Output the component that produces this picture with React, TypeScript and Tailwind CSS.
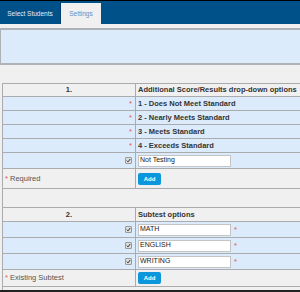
import React from 'react';

const font = "font-['Liberation_Sans',Arial,sans-serif]";

function Check() {
  return (
    <span className="inline-flex h-[7px] w-[7px] items-center justify-center rounded-[1px] border border-[#9a9a9a] bg-[#dcdcdc]">
      <svg viewBox="0 0 8 8" className="h-[5px] w-[5px]">
        <path d="M1.2 4.2 L3.2 6.2 L6.8 1.6" fill="none" stroke="#333" strokeWidth="1.6" />
      </svg>
    </span>
  );
}

function Star() {
  return <span className="text-[#e4505a]">*</span>;
}

function AddButton() {
  return (
    <button className="h-[12px] w-[23px] rounded-[2px] bg-[#0c97dd] text-[6px] font-bold leading-none text-white">
      Add
    </button>
  );
}

function Field({ value }: { value: string }) {
  return (
    <div className="flex h-[12px] w-[93px] items-center border border-[#c4c4c4] bg-white px-[1px] text-[7px] text-[#222]">
      {value}
    </div>
  );
}

const line = 'border-b border-[#a9abad]';

function Row({ left, right, h, blue = true }: { left: React.ReactNode; right: React.ReactNode; h: string; blue?: boolean }) {
  return (
    <div className={`flex ${h} ${line} ${blue ? 'bg-[#dcebfc]' : ''}`}>
      <div className="flex w-[133px] shrink-0 items-center justify-end border-r border-[#a9abad] pr-[3px]">{left}</div>
      <div className="flex flex-1 items-center gap-[3px] pl-[2px]">{right}</div>
    </div>
  );
}

function Header({ num, title, h }: { num: string; title: string; h: string }) {
  return (
    <div className={`flex ${h} border-y border-[#a9abad] text-[7.5px] font-bold text-[#333]`}>
      <div className="flex w-[133px] shrink-0 items-center justify-center border-r border-[#a9abad]">{num}</div>
      <div className="flex flex-1 items-center whitespace-nowrap pl-[2px]">{title}</div>
    </div>
  );
}

export default function App() {
  const scores = ['1 - Does Not Meet Standard', '2 - Nearly Meets Standard', '3 - Meets Standard', '4 - Exceeds Standard'];
  const subtests = ['MATH', 'ENGLISH', 'WRITING'];

  return (
    <div className={`flex h-[292px] w-[300px] flex-col overflow-hidden border-t border-black bg-[#f0f0f0] ${font}`}>
      <div className="flex h-[23px] shrink-0 items-end bg-[#00508a]">
        <div className="flex h-[23px] w-[61px] items-center justify-center border-r border-[#003e6e] pt-[2px] text-[6.5px] text-[#e6eef7]">
          Select Students
        </div>
        <div className="flex h-[21px] w-[40px] items-center justify-center bg-[#f0f0f0] text-[6.5px] text-[#5b8fca]">
          Settings
        </div>
      </div>

      <div className="mt-[4px] h-[37px] shrink-0 border-y-2 border-l border-[#aeb2b6] bg-[#dcebfc]" />

      <div className="ml-[2px] mt-[18px] flex flex-1 flex-col border-l border-[#a9abad] text-[7.5px] text-[#333]">
        <Header num="1." title="Additional Score/Results drop-down options" h="h-[14px]" />
        {scores.map((s) => (
          <Row key={s} h="h-[14px]" left={<Star />} right={<span className="whitespace-nowrap font-bold">{s}</span>} />
        ))}
        <Row h="h-[16px]" left={<Check />} right={<Field value="Not Testing" />} />
        <Row
          h="h-[20px]"
          blue={false}
          left={
            <span className="mr-auto pl-[2px] text-[#555]">
              <Star /> Required
            </span>
          }
          right={<AddButton />}
        />
        <div className="h-[18px] shrink-0" />
        <Header num="2." title="Subtest options" h="h-[15px]" />
        {subtests.map((s) => (
          <Row
            key={s}
            h="h-[16px]"
            left={<Check />}
            right={
              <>
                <Field value={s} />
                <Star />
              </>
            }
          />
        ))}
        <Row
          h="h-[17px]"
          blue={false}
          left={
            <span className="mr-auto pl-[2px] text-[#555]">
              <Star /> Existing Subtest
            </span>
          }
          right={<AddButton />}
        />
        <div className="flex-1" />
      </div>
      <div className="h-[2px] shrink-0 bg-[#222]" />
    </div>
  );
}
